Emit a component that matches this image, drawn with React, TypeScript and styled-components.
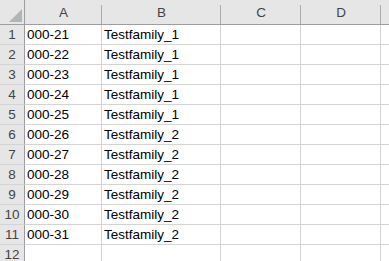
import React from 'react';
import styled, { createGlobalStyle } from 'styled-components';

const GlobalStyle = createGlobalStyle`
  html, body {
    margin: 0;
    padding: 0;
    background: #FFFFFF;
    overflow: hidden;
  }
`
const Sheet = styled.div`
  display: grid;
  grid-template-columns: 25px 77px 119px 80px 80px 80px;
  width: 389px;
  height: 261px;
  overflow: hidden;
  font-family: "Liberation Sans", Arial, sans-serif;
  font-size: 13.5px;
  color: #000000;
`
const Corner = styled.div`
  position: relative;
  box-sizing: border-box;
  height: 25px;
  background: #E6E6E6;
  border-right: 1px solid #9E9E9E;
  border-bottom: 1px solid #9E9E9E;
`
const CornerMark = styled.svg`
  position: absolute;
  left: 9px;
  top: 9px;
`
const ColHead = styled.div`
  position: relative;
  box-sizing: border-box;
  height: 25px;
  padding-top: 2px;
  line-height: 22px;
  text-align: center;
  color: #444444;
  background: #E6E6E6;
  border-bottom: 1px solid #9E9E9E;
  &::after {
    content: '';
    position: absolute;
    right: 0;
    top: 5px;
    bottom: 0;
    width: 1px;
    background: #ABABAB;
  }
`
const RowHead = styled.div`
  box-sizing: border-box;
  height: 20px;
  line-height: 19px;
  text-align: center;
  color: #444444;
  background: #E6E6E6;
  border-right: 1px solid #9E9E9E;
  border-bottom: 1px solid #D4D4D4;
`
const Cell = styled.div`
  box-sizing: border-box;
  height: 20px;
  line-height: 19px;
  padding-left: 2px;
  white-space: nowrap;
  overflow: hidden;
  border-right: 1px solid #D4D4D4;
  border-bottom: 1px solid #D4D4D4;
`

const columns = ['A', 'B', 'C', 'D', ''];
const rows: [string, string][] = [
  ['000-21', 'Testfamily_1'],
  ['000-22', 'Testfamily_1'],
  ['000-23', 'Testfamily_1'],
  ['000-24', 'Testfamily_1'],
  ['000-25', 'Testfamily_1'],
  ['000-26', 'Testfamily_2'],
  ['000-27', 'Testfamily_2'],
  ['000-28', 'Testfamily_2'],
  ['000-29', 'Testfamily_2'],
  ['000-30', 'Testfamily_2'],
  ['000-31', 'Testfamily_2'],
  ['', ''],
];

export default function App() {
  return (
    <>
      <GlobalStyle />
      <Sheet>
        <Corner>
          <CornerMark width="14" height="14" viewBox="0 0 14 14">
            <polygon points="13,0 13,13 0,13" fill="#B4B4B4" />
          </CornerMark>
        </Corner>
        {columns.map((c, i) => <ColHead key={i}>{c}</ColHead>)}
        {rows.map((r, i) => (
          <React.Fragment key={i}>
            <RowHead>{i + 1}</RowHead>
            <Cell>{r[0]}</Cell>
            <Cell>{r[1]}</Cell>
            <Cell />
            <Cell />
            <Cell />
          </React.Fragment>
        ))}
      </Sheet>
    </>
  );
}
